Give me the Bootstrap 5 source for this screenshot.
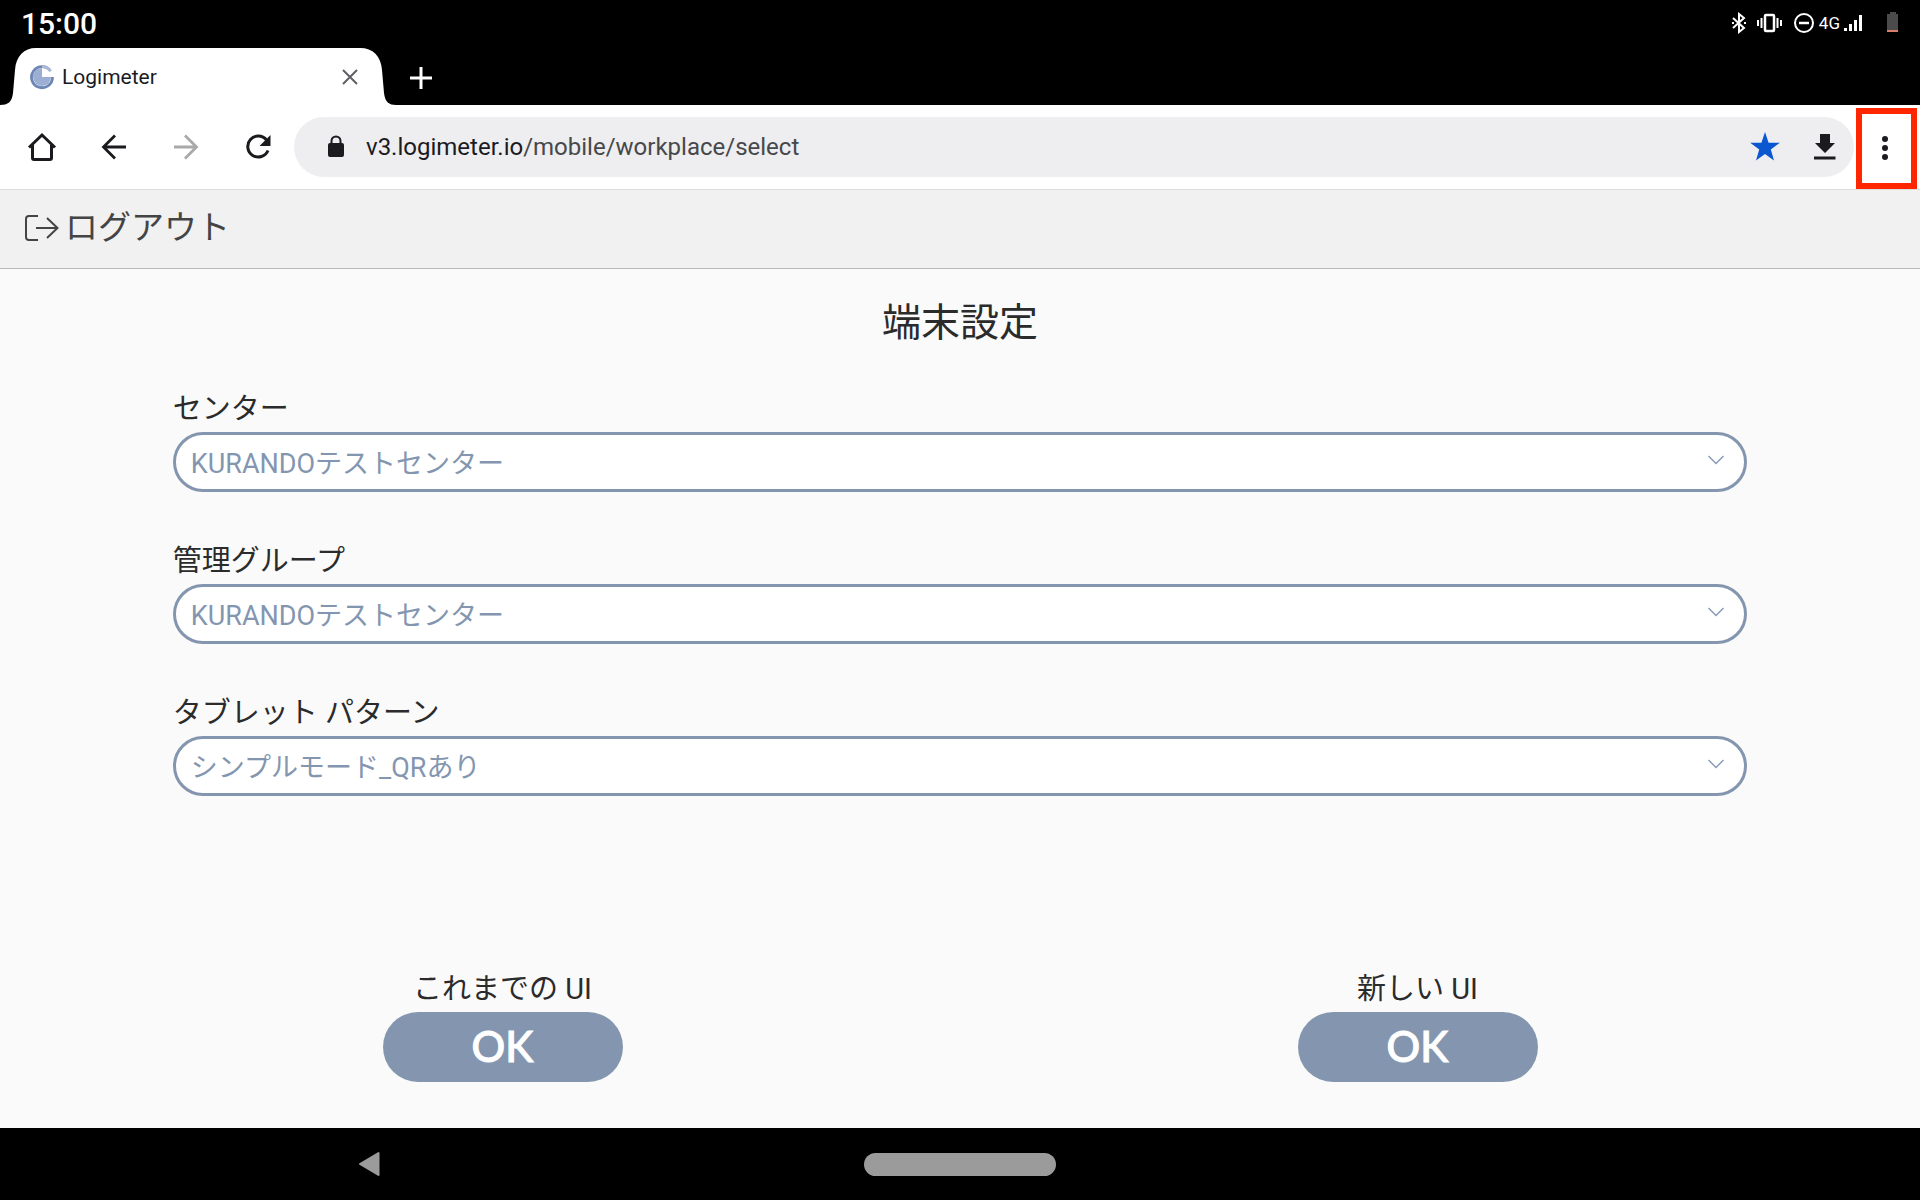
<!DOCTYPE html>
<html lang="ja">
<head>
<meta charset="utf-8">
<meta name="viewport" content="width=device-width, initial-scale=1">
<title>Logimeter</title>
<link href="https://cdn.jsdelivr.net/npm/bootstrap@5.3.0/dist/css/bootstrap.min.css" rel="stylesheet">
<style>
body { font-family: Roboto, "Noto Sans CJK JP", sans-serif; background: #fafafa; color: #2b2b2b; }
svg { display: block; flex: none; }
.icon-btn { border: 0; padding: 0; background: none; display: flex; align-items: center; justify-content: center; color: #1b1b1f; }
.status-bar { height: 48px; padding: 0 21px 0 21px; font-size: 30px; font-weight: 500; line-height: 48px; }
.status-icons { height: 46px; }
.net-label { font-size: 17px; font-weight: 400; line-height: 24px; }
.tab-strip { height: 57px; }
.browser-tab { width: 396px; height: 57px; padding: 0 34px 0 29px; color: #1b1b1f; font-size: 21px; line-height: 56px; }
.tab-shape { position: absolute; left: 0; top: 0; }
.tab-name { padding-left: 7px; }
.new-tab { width: 50px; height: 60px; }
.toolbar { height: 85px; padding: 0 3px 0 6px; border-bottom: 1px solid #dcdcdc; }
.tool-btn { width: 72px; height: 72px; }
.omnibox { height: 60px; background: #eeedf0; padding: 0 14px 0 28px; margin-right: 2px; }
.url-text { font-size: 24px; line-height: 60px; color: #47484b; text-decoration: none; padding-left: 18px; }
.url-host { color: #1b1b1f; }
.omni-btn { width: 30px; height: 48px; margin-left: 30px; }
.menu-btn { width: 61px; height: 81px; border: 6px solid #ff2600; background: #fff; padding-right: 4px; margin-top: 3px; }
.page-header { height: 79px; background: #f1f1f1; border-bottom: 1px solid #b9b9b9; padding: 0 24px 2px; }
.logout-link { color: #444; font-size: 33px; line-height: 48px; text-decoration: none; gap: 5px; }
.page-title { font-size: 39px; font-weight: 400; line-height: 60px; margin: 24px 0 33px; }
.settings-form { width: 82%; }
.field-label { display: block; font-size: 29px; line-height: 46px; }
.field-group { margin-bottom: 46px; }
.pill-select.form-select {
  height: 60px; border: 3px solid #8496af; border-radius: 30px; color: #8496af; font-size: 27px; line-height: 40px;
  padding: 9px 60px 5px 15px; background-color: #fff;
  background-image: url("data:image/svg+xml,%3Csvg xmlns='http://www.w3.org/2000/svg' viewBox='0 0 16 10'%3E%3Cpath d='M.5 1 8 8.500 15.500 1' fill='none' stroke='%238496af' stroke-width='1.300'/%3E%3C/svg%3E");
  background-size: 16px 10px; background-position: right 20px top 20px;
}
.choices { padding: 0 45px 46px; }
.choice-label { font-size: 29px; line-height: 46px; }
.ok-btn.btn { width: 240px; height: 70px; border: 0; border-radius: 35px; background: #8496af; color: #fff; font: 500 42px/66px Lato, sans-serif; -webkit-text-stroke: 1px #fff; padding: 0 0 2px; }
.system-nav { height: 72px; }
.nav-back { margin-left: 358px; }
.home-pill { width: 192px; height: 23px; border: 0; border-radius: 12px; background: #9b9b9b; }
</style>
</head>
<body class="d-flex flex-column min-vh-100">
<div class="bg-black text-white">
  <div class="status-bar d-flex justify-content-between">
    <span>15:00</span>
    <div class="status-icons d-flex align-items-center">
      <svg width="16" height="22" viewBox="0 0 16 22" fill="none" stroke="#fff" stroke-width="2"><path d="M2 6l11 10-5 4V2l5 4L2 16"/><path d="M1 11h2M13 11h2"/></svg>
      <svg class="ms-2" width="30" height="22" viewBox="0 0 30 22" fill="none" stroke="#fff" stroke-width="2"><rect x="10" y="3" width="9" height="16" rx="1" stroke-width="2.500"/><path d="M6.500 6v10M22.500 6v10M3 8v6M26 8v6"/></svg>
      <svg class="ms-2" width="22" height="22" viewBox="0 0 22 22" fill="none" stroke="#fff" stroke-width="2"><circle cx="11" cy="11" r="9"/><path d="M6 11h10" stroke-width="2.500"/></svg>
      <span class="net-label ms-1">4G</span>
      <svg class="ms-1" width="19" height="18" viewBox="0 0 19 18" fill="#fff"><path d="M0 14h3v3H0zM5 10h3v7H5zM10 6h3v11h-3zM15 1h3v16h-3z"/></svg>
      <svg class="ms-4" width="12" height="22" viewBox="0 0 12 22"><path d="M3 0h6v2h2v18H0V2h3z" fill="#4b4b4b"/><path d="M0 18h11v2H0z" fill="#d9806a"/></svg>
    </div>
  </div>
  <div class="tab-strip d-flex">
    <div class="browser-tab position-relative d-flex align-items-center">
      <svg class="tab-shape" width="396" height="57" viewBox="0 0 396 57" fill="#fff"><path d="M0 57C8 57 12 54 13 45L15 22C16 8 24 0 36 0H360C373 0 381 8 382 22L384 45C385 54 389 57 396 57z"/></svg>
      <svg class="position-relative" width="26" height="26" viewBox="0 0 26 26"><circle cx="13" cy="13" r="9" fill="#9daed4"/><path d="M13 4V13H23V4z" fill="#fff"/><path d="M21.500 7A10.500 10.500 0 1 0 23.500 13" fill="none" stroke="#6d86b4" stroke-width="2.800"/><path d="M13 2.500A10.500 10.500 0 0 1 21.500 7" fill="none" stroke="#a9b8d6" stroke-width="2.800"/></svg>
      <span class="tab-name position-relative flex-grow-1">Logimeter</span>
      <button class="icon-btn position-relative" type="button" aria-label="タブを閉じる"><svg width="24" height="24" viewBox="0 0 24 24" stroke="#5f6064" stroke-width="2"><path d="M5 5l14 14M19 5L5 19"/></svg></button>
    </div>
    <button class="icon-btn new-tab" type="button" aria-label="新しいタブ"><svg width="22" height="22" viewBox="0 0 22 22" stroke="#fff" stroke-width="3"><path d="M11 0v22M0 11h22"/></svg></button>
  </div>
</div>
<nav class="toolbar d-flex align-items-center bg-white">
  <button class="icon-btn tool-btn" type="button" aria-label="ホーム"><svg width="30" height="30" viewBox="0 0 30 30" fill="none" stroke="currentColor" stroke-width="3"><path d="M2 15.500L15 3l13 12.500" stroke-linejoin="miter"/><path d="M5.500 13v13a1.500 1.500 0 0 0 1.500 1.500h16a1.500 1.500 0 0 0 1.500-1.500V13"/></svg></button>
  <button class="icon-btn tool-btn" type="button" aria-label="戻る"><svg width="26" height="26" viewBox="0 0 26 26" fill="none" stroke="currentColor" stroke-width="2.800"><path d="M25 13H3M14 1.500L2.500 13 14 24.500"/></svg></button>
  <button class="icon-btn tool-btn" type="button" aria-label="進む"><svg width="26" height="26" viewBox="0 0 26 26" fill="none" stroke="#a9a9ab" stroke-width="2.800"><path d="M1 13h22M12 1.500L23.500 13 12 24.500"/></svg></button>
  <button class="icon-btn tool-btn" type="button" aria-label="再読み込み"><svg width="26" height="26" viewBox="0 0 26 26"><path d="M21.500 6A10.500 10.500 0 1 0 23 16.500" fill="none" stroke="currentColor" stroke-width="3"/><path d="M25.500 1v11h-11z" fill="currentColor"/></svg></button>
  <div class="omnibox d-flex align-items-center flex-grow-1 rounded-pill">
    <svg width="26" height="26" viewBox="0 0 26 26"><rect x="6" y="9" width="16" height="14" rx="2" fill="#1b1b1f"/><path d="M9.500 10V7a4.500 4.500 0 0 1 9 0v3" fill="none" stroke="#1b1b1f" stroke-width="2"/></svg>
    <a class="url-text flex-grow-1" href="#"><span class="url-host">v3.logimeter.io</span>/mobile/workplace/select</a>
    <button class="icon-btn omni-btn" type="button" aria-label="ブックマーク"><svg width="30" height="30" viewBox="0 0 30 30"><path d="M15 0l3.600 10.700 11.200.1-9 6.800L24 28.500l-9-6.600-9 6.600 3.200-10.900-9-6.800 11.200-.1z" fill="#0b57d0"/></svg></button>
    <button class="icon-btn omni-btn" type="button" aria-label="ダウンロード"><svg width="22" height="28" viewBox="0 0 22 28" fill="currentColor"><path d="M6 1h10v9h5L11 20 1 10h5zM0 23.500h21.500v3H0z"/></svg></button>
  </div>
  <button class="icon-btn menu-btn" type="button" aria-label="メニュー"><svg width="8" height="26" viewBox="0 0 8 26" fill="currentColor"><circle cx="4" cy="3" r="3"/><circle cx="4" cy="12" r="3"/><circle cx="4" cy="21" r="3"/></svg></button>
</nav>
<header class="page-header d-flex align-items-center">
  <a class="logout-link d-flex align-items-center" href="#">
    <svg width="36" height="28" viewBox="0 0 36 28" fill="none" stroke="currentColor" stroke-width="2"><path d="M14 2H5a3 3 0 0 0-3 3v18a3 3 0 0 0 3 3h9M12 14h21M23 4l10.500 10L23 24"/></svg>
    <span>ログアウト</span>
  </a>
</header>
<main class="flex-grow-1 d-flex flex-column">
  <h1 class="page-title text-center">端末設定</h1>
  <form class="settings-form mx-auto">
    <div class="field-group">
      <label class="field-label" for="center">センター</label>
      <select class="form-select pill-select" id="center"><option>KURANDOテストセンター</option></select>
    </div>
    <div class="field-group">
      <label class="field-label" for="group">管理グループ</label>
      <select class="form-select pill-select" id="group"><option>KURANDOテストセンター</option></select>
    </div>
    <div class="field-group">
      <label class="field-label" for="pattern">タブレット パターン</label>
      <select class="form-select pill-select" id="pattern"><option>シンプルモード_QRあり</option></select>
    </div>
  </form>
  <div class="choices row g-0 mt-auto text-center">
    <div class="col-6">
      <div class="choice-label" id="old-ui">これまでの UI</div>
      <button class="btn ok-btn" type="button" aria-describedby="old-ui">OK</button>
    </div>
    <div class="col-6">
      <div class="choice-label" id="new-ui">新しい UI</div>
      <button class="btn ok-btn" type="button" aria-describedby="new-ui">OK</button>
    </div>
  </div>
</main>
<footer class="system-nav row g-0 align-items-center bg-black">
  <div class="col"><button class="icon-btn nav-back" type="button" aria-label="戻る"><svg width="22" height="26" viewBox="0 0 22 26"><path d="M20.500 2v22L2 13z" fill="#9b9b9b" stroke="#9b9b9b" stroke-width="2" stroke-linejoin="round"/></svg></button></div>
  <div class="col-auto d-flex"><button class="home-pill" type="button" aria-label="ホーム画面"></button></div>
  <div class="col"></div>
</footer>
<script src="https://cdn.jsdelivr.net/npm/bootstrap@5.3.0/dist/js/bootstrap.bundle.min.js"></script>
</body>
</html>
